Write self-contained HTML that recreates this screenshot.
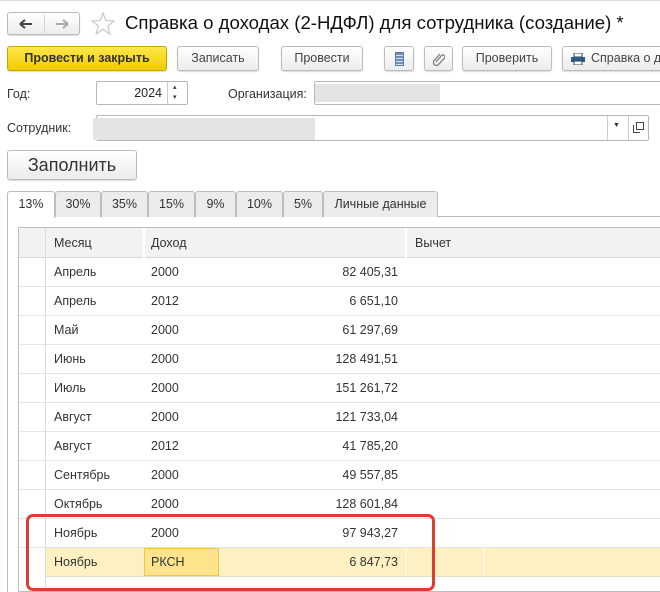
<!DOCTYPE html>
<html><head><meta charset="utf-8"><style>
*{box-sizing:border-box;margin:0;padding:0}
body{width:660px;height:592px;overflow:hidden;background:#fff;font-family:"Liberation Sans",Arial,sans-serif;font-size:12.5px;color:#333;position:relative}
.a{position:absolute}
.btn{position:absolute;border:1px solid #bcbcbc;border-radius:3px;background:linear-gradient(#fff,#ececec);box-shadow:0 1px 1px rgba(0,0,0,.15);text-align:center;color:#444;line-height:23px;white-space:nowrap;overflow:hidden}
.inp{position:absolute;border:1px solid #b8b8b8;border-radius:2px;background:#fff}
.blur{position:absolute;background:#e2e2e2}
.tab{position:absolute;top:191px;height:26px;border:1px solid #bdbdbd;border-bottom:none;background:#ececec;text-align:center;line-height:25px;color:#333;border-radius:3px 3px 0 0}
.row{position:absolute;left:19px;width:641px;height:29px;border-bottom:1px solid #e4e4e4}
.row span{position:absolute;top:7px}
.c1{left:35px}.c2{left:132px}.c3{right:262px}
</style></head><body>
<div class="a" style="left:0;top:0;width:660px;height:1px;background:#ddd"></div>
<div class="btn" style="left:7px;top:12px;width:73px;height:23px">
<svg class="a" style="left:11px;top:6px" width="14" height="10"><path d="M1 5H13M1 5L6 1M1 5L6 9" stroke="#444" stroke-width="2" fill="none"/></svg>
<span class="a" style="left:36px;top:2px;width:1px;height:18px;background:#d4d4d4"></span>
<svg class="a" style="left:47px;top:6px" width="14" height="10"><path d="M1 5H13M13 5L8 1M13 5L8 9" stroke="#aaa" stroke-width="2" fill="none"/></svg></div>
<svg class="a" style="left:91px;top:12px" width="24" height="23"><path d="M12 1L14.9 8.6L23 8.9L16.7 14L18.8 22L12 17.4L5.2 22L7.3 14L1 8.9L9.1 8.6Z" fill="none" stroke="#c8c8c8" stroke-width="1.2"/></svg>
<div class="a" style="left:125px;top:12px;font-size:18.6px;color:#111;white-space:nowrap">Справка о доходах (2-НДФЛ) для сотрудника (создание) *</div>

<div class="btn" style="left:7px;top:46px;width:160px;height:25px;background:linear-gradient(#fde74a,#f2cc00);border-color:#c9a800;color:#333;font-weight:bold">Провести и закрыть</div>
<div class="btn" style="left:177px;top:46px;width:82px;height:25px">Записать</div>
<div class="btn" style="left:281px;top:46px;width:82px;height:25px">Провести</div>
<div class="btn" style="left:384px;top:46px;width:30px;height:25px"><div class="a" style="left:10px;top:5px;width:9px;height:14px;background:repeating-linear-gradient(#6d8fb8 0 2px,#d4e0ee 2px 3px);border:1px solid #5a7aa8"></div></div>
<div class="btn" style="left:424px;top:46px;width:29px;height:25px"><svg class="a" style="left:8px;top:5px" width="12" height="14"><path d="M3 10L8.5 3.5a2 2 0 0 1 3 2.6L5 13a3 3 0 0 1-4.3-3.8L7 2" fill="none" stroke="#777" stroke-width="1.2"/></svg></div>
<div class="btn" style="left:462px;top:46px;width:90px;height:25px">Проверить</div>
<div class="btn" style="left:562px;top:46px;width:120px;height:25px;text-align:left;padding-left:28px">Справка о доходах<svg class="a" style="left:8px;top:6px" width="14" height="12"><rect x="3" y="0" width="8" height="4" fill="#fff" stroke="#345"/><rect x="0" y="4" width="14" height="5" fill="#2b5b8a"/><rect x="3" y="8" width="8" height="4" fill="#fff" stroke="#345"/></svg></div>

<div class="a" style="left:7px;top:87px">Год:</div>
<div class="inp" style="left:96px;top:81px;width:92px;height:24px"><span class="a" style="right:25px;top:4px;color:#222">2024</span><div class="a" style="left:70px;top:0;width:1px;height:22px;background:#ccc"></div><span class="a" style="left:76px;top:1px;font-size:7px">▴</span><span class="a" style="left:76px;top:11px;font-size:7px">▾</span></div>
<div class="a" style="left:228px;top:87px">Организация:</div>
<div class="inp" style="left:314px;top:81px;width:360px;height:24px"></div>
<div class="blur" style="left:315px;top:84px;width:125px;height:18px;background:#e4e4e4"></div>

<div class="a" style="left:7px;top:121px">Сотрудник:</div>
<div class="inp" style="left:96px;top:115px;width:553px;height:26px"><div class="a" style="left:510px;top:0;width:1px;height:24px;background:#ccc"></div><span class="a" style="left:516px;top:6px;font-size:7px">▼</span><div class="a" style="left:531px;top:0;width:1px;height:24px;background:#ccc"></div><svg class="a" style="left:536px;top:6px" width="11" height="11"><rect x="3.5" y="0.5" width="7" height="7" fill="none" stroke="#444"/><path d="M0.5 3V10.5H7" fill="none" stroke="#444"/></svg></div>
<div class="blur" style="left:93px;top:118px;width:222px;height:22px;background:#e4e4e4"></div>

<div class="btn" style="left:7px;top:150px;width:130px;height:30px;line-height:29px;font-size:18px;color:#333">Заполнить</div>

<div class="a" style="left:7px;top:216px;width:660px;height:1px;background:#bdbdbd"></div>
<div class="a" style="left:7px;top:216px;width:1px;height:376px;background:#bdbdbd"></div>
<div class="tab" style="left:7px;width:48px;background:#fff;height:27px">13%</div>
<div class="tab" style="left:55px;width:46px">30%</div>
<div class="tab" style="left:101px;width:47px">35%</div>
<div class="tab" style="left:148px;width:47px">15%</div>
<div class="tab" style="left:195px;width:41px">9%</div>
<div class="tab" style="left:236px;width:47px">10%</div>
<div class="tab" style="left:283px;width:40px">5%</div>
<div class="tab" style="left:323px;width:115px">Личные данные</div>

<div class="a" style="left:18px;top:227px;width:650px;height:365px;border:1px solid #bdbdbd;border-right:none"></div>
<div class="a" style="left:19px;top:228px;width:641px;height:30px;background:#f2f2f2;border-bottom:1px solid #d8d8d8"></div>
<div class="a" style="left:45px;top:228px;width:1px;height:364px;background:#dcdcdc"></div>
<div class="a" style="left:143px;top:228px;width:2px;height:30px;background:#fff"></div>
<div class="a" style="left:405px;top:228px;width:2px;height:30px;background:#fff"></div>
<div class="a" style="left:54px;top:236px">Месяц</div>
<div class="a" style="left:151px;top:236px">Доход</div>
<div class="a" style="left:415px;top:236px">Вычет</div>

<div class="row" style="top:258px"><span class="c1">Апрель</span><span class="c2">2000</span><span class="c3">82 405,31</span></div>
<div class="row" style="top:287px"><span class="c1">Апрель</span><span class="c2">2012</span><span class="c3">6 651,10</span></div>
<div class="row" style="top:316px"><span class="c1">Май</span><span class="c2">2000</span><span class="c3">61 297,69</span></div>
<div class="row" style="top:345px"><span class="c1">Июнь</span><span class="c2">2000</span><span class="c3">128 491,51</span></div>
<div class="row" style="top:374px"><span class="c1">Июль</span><span class="c2">2000</span><span class="c3">151 261,72</span></div>
<div class="row" style="top:403px"><span class="c1">Август</span><span class="c2">2000</span><span class="c3">121 733,04</span></div>
<div class="row" style="top:432px"><span class="c1">Август</span><span class="c2">2012</span><span class="c3">41 785,20</span></div>
<div class="row" style="top:461px"><span class="c1">Сентябрь</span><span class="c2">2000</span><span class="c3">49 557,85</span></div>
<div class="row" style="top:490px"><span class="c1">Октябрь</span><span class="c2">2000</span><span class="c3">128 601,84</span></div>
<div class="row" style="top:519px"><span class="c1">Ноябрь</span><span class="c2">2000</span><span class="c3">97 943,27</span></div>
<div class="row" style="top:548px;left:46px;width:614px;background:#fdf1c4;border-bottom:1px solid #e8e0c0"><span style="left:8px">Ноябрь</span><span style="right:262px">6 847,73</span></div>
<div class="a" style="left:144px;top:548px;width:75px;height:28px;background:#fce38c;border:1px solid #f5c542;padding:6px 0 0 6px;color:#333">РКСН</div>
<div class="a" style="left:405px;top:548px;width:2px;height:28px;background:#fff8dc"></div>
<div class="a" style="left:483px;top:548px;width:2px;height:28px;background:#fff8dc"></div>
<div class="a" style="left:26px;top:514px;width:409px;height:77px;border:3px solid #e03c31;border-radius:7px"></div>
</body></html>
